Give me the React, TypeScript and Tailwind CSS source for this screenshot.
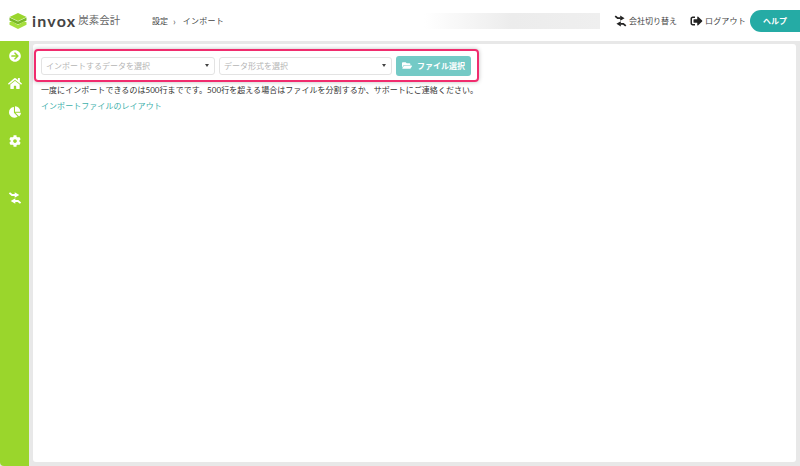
import { FaArrowCircleRight, FaChartPie, FaCog, FaFolderOpen, FaHome, FaSignOutAlt } from "react-icons/fa";

const fontStack = { fontFamily: '"Lato", "Noto Sans CJK JP", sans-serif' };

const SwitchIcon = ({ className }: { className?: string }) => (
  <svg viewBox="0 0 16 14" className={className} fill="currentColor">
    <path d="M1.5 1 L4.5 3.5 H8" fill="none" stroke="currentColor" strokeWidth="2.2" />
    <path d="M7.6 0.2 L13 3.5 L7.6 6.6 Z" />
    <path d="M14.5 13 L11.5 10.5 H8" fill="none" stroke="currentColor" strokeWidth="2.2" />
    <path d="M8.4 13.8 L3 10.5 L8.4 7.4 Z" />
  </svg>
);

const Logo = () => (
  <svg viewBox="0 0 18 16" className="h-[16px] w-[18px] shrink-0">
    <path d="M9 0 L17.5 4 L9 8 L0.5 4 Z" fill="#9ad62c" />
    <path d="M0.5 4.6 L9 8.6 L17.5 4.6 V7.4 L9 11.4 L0.5 7.4 Z" fill="#79b928" />
    <path d="M0.5 9.2 L3 8.2 L9 11.9 L15 8.2 L17.5 9.2 V11.8 L9 16 L0.5 11.8 Z" fill="#a6df3e" />
  </svg>
);

const SelectBox = ({ placeholder, width }: { placeholder: string; width: string }) => (
  <div className={`flex h-[18px] items-center justify-between rounded-[3px] border border-[#e3e3e3] bg-white pl-[4px] pr-[5px] ${width}`}>
    <span className="whitespace-nowrap text-[8px] text-[#b5b5b5]">{placeholder}</span>
    <span className="h-0 w-0 border-x-[2.5px] border-t-[3px] border-x-transparent border-t-[#444]" />
  </div>
);

const App = () => {
  return (
    <div className="flex h-[466px] w-[800px] flex-col overflow-hidden bg-[#e8e8e8]" style={fontStack}>
      <header className="flex h-[41px] shrink-0 items-center whitespace-nowrap bg-white pl-[9px]">
        <div className="flex w-[143px] items-center">
          <Logo />
          <span className="ml-[5px] text-[16px] font-bold leading-none tracking-[1.2px] text-[#444]">invox</span>
          <span className="ml-[2px] text-[10.5px] text-[#666]">炭素会計</span>
        </div>
        <nav className="flex w-[272px] items-center text-[8px] text-[#444]">
          <span>設定</span>
          <span className="ml-[5px] mr-[7px] text-[10px] leading-none text-[#666]">›</span>
          <span className="tracking-[0.03em]">インポート</span>
        </nav>
        <div className="h-[16px] w-[176px] bg-gradient-to-r from-white via-[#ececec] to-[#efefef]" />
        <div className="ml-[14px] flex w-[76px] items-center gap-[2px] text-[8px] text-[#444]">
          <SwitchIcon className="h-[12px] w-[13px] text-[#222]" />
          <span>会社切り替え</span>
        </div>
        <div className="flex w-[60px] items-center gap-[2px] text-[8px] tracking-[0.02em] text-[#444]">
          <FaSignOutAlt className="h-[12px] w-[13px] text-[#222]" />
          <span>ログアウト</span>
        </div>
        <div className="flex h-[22px] flex-1 items-center rounded-l-[11px] bg-[#25aba5] pl-[13px] text-[8px] font-bold text-white">
          ヘルプ
        </div>
      </header>
      <div className="flex min-h-0 flex-1">
        <aside className="flex w-[29px] shrink-0 flex-col items-center rounded-bl-[4px] bg-[#9ad62c] pt-[9px] text-white">
          <FaArrowCircleRight className="h-[12px] w-[12px]" />
          <FaHome className="mt-[15px] h-[13px] w-[14px]" />
          <FaChartPie className="mt-[16px] h-[12px] w-[12px]" />
          <FaCog className="mt-[17px] h-[12px] w-[12px]" />
          <SwitchIcon className="mt-[45px] h-[12px] w-[14px]" />
        </aside>
        <main className="mx-[4px] mb-[4px] mt-[3px] flex-1 rounded-[3px] bg-white pl-[1px] pt-[5px]">
          <div className="flex h-[33px] w-[445px] items-center gap-[4px] rounded-[4px] border-2 border-[#f02c6e] pl-[5px] shadow-[0_0_4px_rgba(0,0,0,0.25)]">
            <SelectBox placeholder="インポートするデータを選択" width="w-[174px]" />
            <SelectBox placeholder="データ形式を選択" width="w-[173px]" />
            <button
              type="button"
              className="flex h-[20px] w-[75px] items-center justify-center gap-[5px] rounded-[3px] bg-[#74cac6] text-[8px] font-bold text-white"
            >
              <FaFolderOpen className="h-[9px] w-[10px]" />
              ファイル選択
            </button>
          </div>
          <p className="ml-[7px] mt-[1px] whitespace-nowrap text-[8px] leading-[14px] tracking-[0.05px] text-[#333]">
            一度にインポートできるのは500行までです。500行を超える場合はファイルを分割するか、サポートにご連絡ください。
          </p>
          <p className="ml-[7px] mt-[2px] whitespace-nowrap text-[8px] leading-[14px] tracking-[0.05px] text-[#3eb0ab]">インポートファイルのレイアウト</p>
        </main>
      </div>
    </div>
  );
};

export default App;
